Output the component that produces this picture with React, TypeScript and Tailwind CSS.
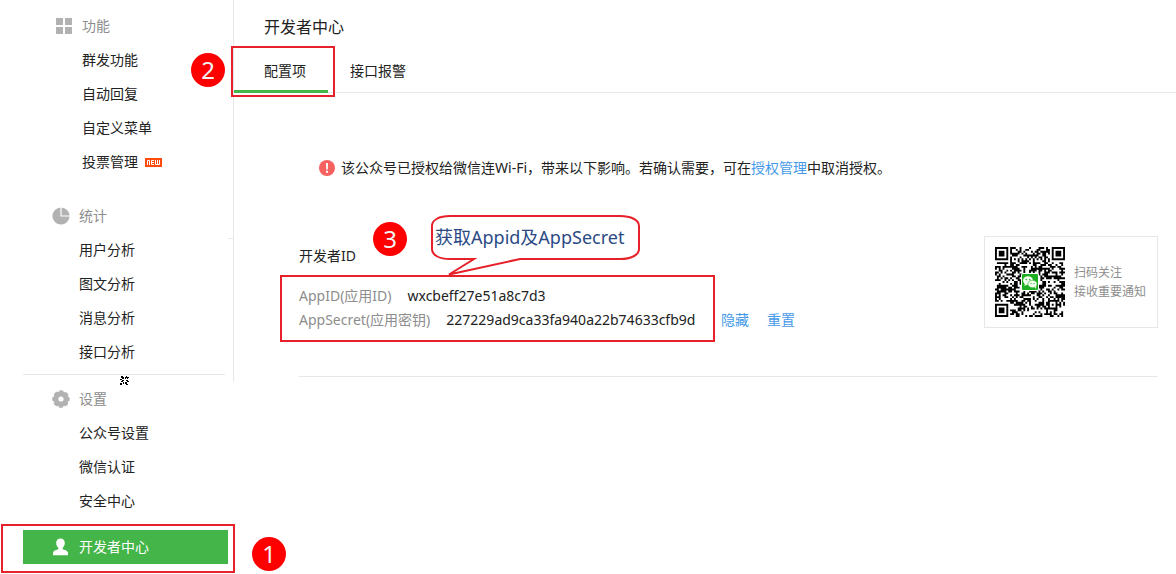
import React from "react";

interface NavGroupProps {
  title: string;
  icon: React.ReactNode;
  items: string[];
  newItem?: string;
  indent: string;
}

const GridIcon = () => (
  <svg width="17" height="16" viewBox="0 0 17 16" fill="#b2b2b2">
    <path d="M1 0h7v7H1zM10 0h7v7h-7zM1 9h7v7H1zM10 9h7v7h-7z" />
  </svg>
);

const PieIcon = () => (
  <svg width="18" height="18" viewBox="0 0 18 18">
    <circle cx="9" cy="9" r="8.6" fill="#b2b2b2" />
    <path d="M9 0v9h9" fill="none" stroke="#fff" strokeWidth="1.2" />
  </svg>
);

const GearIcon = () => (
  <svg width="18" height="18" viewBox="0 0 18 18">
    <circle cx="9" cy="9" r="7.8" fill="#b2b2b2" />
    <circle
      cx="9"
      cy="9"
      r="7"
      fill="none"
      stroke="#b2b2b2"
      strokeWidth="3.4"
      strokeDasharray="3.5 2"
      strokeDashoffset="1.75"
    />
    <circle cx="9" cy="9" r="2.6" fill="#fff" />
  </svg>
);

const UserIcon = () => (
  <svg width="17" height="18" viewBox="0 0 16 18" fill="#fff">
    <path d="M8 0.5c-2.700 0-4.300 2-4.300 4.600 0 2 .9 3.700 2.100 4.600.4 1-.2 1.600-1.300 2C2 12.500.5 13.300.5 15v2.300h15V15c0-1.700-1.500-2.500-4-3.300-1.100-.4-1.700-1-1.300-2 1.200-.9 2.100-2.600 2.100-4.600C12.300 2.500 10.700.5 8 .5z" />
  </svg>
);

const AlertIcon = () => (
  <svg width="16" height="16" viewBox="0 0 16 16">
    <circle cx="8" cy="8" r="8" fill="#f76260" />
    <path d="M7 3h2l-.2 6.500H7.200zM7 10.800h2v2H7z" fill="#fff" />
  </svg>
);

const NewBadge = () => (
  <svg width="17" height="9" viewBox="0 0 17 9" role="img" aria-label="new">
    <path d="M0 0h17v9H0z" fill="#ff4a0c" />
    <path
      d="M2.500 7V2.500h2V7M9 2.500H6.500v4H9M6.500 4.500H9M10.500 2v4.500h4V2M12.500 2v4.500"
      fill="none"
      stroke="#fff"
    />
  </svg>
);

const Speckle = () => (
  <svg
    className="absolute left-[120px] top-[376px]"
    width="9"
    height="9"
    viewBox="0 0 9 9"
    fill="#000"
  >
    <path d="M1 0h2v1h1v2H2V2H1zM5 1h1V0h1v2H6v1H5zM7 1h2v1H8v1H7zM0 3h2v1H0zM6 4h2v1h1v1H7V5H6zM2 4h2v1H3v1H1V5h1zM0 7h2v2H0zM3 6h1v2H3zM5 6h2v2h1v1H6V8H5z" />
  </svg>
);

const SIZE = 37;

const inFinder = (x: number, y: number) =>
  (x < 8 && y < 8) || (x >= SIZE - 8 && y < 8) || (x < 8 && y >= SIZE - 8);

const qrPath = () => {
  let seed = 71;
  let d = "";
  for (let y = 0; y < SIZE; y++) {
    for (let x = 0; x < SIZE; x++) {
      seed = (seed * 16807) % 2147483647;
      if (inFinder(x, y)) continue;
      const ring = Math.max(Math.abs(x - 30), Math.abs(y - 30));
      const on =
        ring <= 2
          ? ring !== 1
          : x === 6 || y === 6
            ? (x + y) % 2 === 0
            : seed / 2147483647 < 0.52;
      if (on) d += `M${x} ${y}h1v1h-1z`;
    }
  }
  [
    [0, 0],
    [30, 0],
    [0, 30],
  ].forEach(([x, y]) => {
    d += `M${x} ${y}h7v7h-7zM${x + 1} ${y + 1}v5h5v-5zM${x + 2} ${y + 2}h3v3h-3z`;
  });
  return d;
};

const QrCode = () => (
  <svg width="70" height="70" viewBox="0 0 70 70" role="img" aria-label="QR">
    <path d={qrPath()} transform="scale(1.892)" fill="#000" />
    <rect x="26" y="26" width="18" height="18" rx="2" fill="#fff" />
    <rect x="27" y="27" width="16" height="16" rx="1" fill="#1fae22" />
    <ellipse cx="33" cy="33.500" rx="5" ry="4.200" fill="#f4fff0" />
    <path d="M30 36l-.6 3 3-1.500z" fill="#f4fff0" />
    <ellipse cx="37.500" cy="37" rx="4.600" ry="3.800" fill="#f4fff0" stroke="#1fae22" strokeWidth=".6" />
    <path d="M39.500 40l1.500 2 .2-3z" fill="#f4fff0" />
    <g fill="#1fae22">
      <circle cx="31.300" cy="32.500" r=".7" />
      <circle cx="34.700" cy="32.500" r=".7" />
      <circle cx="36" cy="36.300" r=".6" />
      <circle cx="39" cy="36.300" r=".6" />
    </g>
  </svg>
);

const Step = ({ n, className }: { n: number; className: string }) => (
  <span
    className={`absolute flex h-[34px] w-[34px] items-center justify-center rounded-full bg-[#fe0000] text-2xl text-[#f3f3f3] ${className}`}
  >
    {n}
  </span>
);

const NavGroup = ({ title, icon, items, newItem, indent }: NavGroupProps) => (
  <section>
    <h2 className={`flex h-[34px] items-center text-[#8d8d8d] ${indent}`}>
      <span className="-ml-[27px] flex w-[27px]">{icon}</span>
      {title}
    </h2>
    <ul>
      {items.map((item) => (
        <li key={item} className={`flex h-[34px] items-center ${indent}`}>
          <a href="#">{item}</a>
          {item === newItem && (
            <span className="ml-[7px]">
              <NewBadge />
            </span>
          )}
        </li>
      ))}
    </ul>
  </section>
);

const Sidebar = () => (
  <nav className="relative w-[234px] shrink-0">
    <div className="border-r border-[#e7e7eb] pb-[7px] pt-[9px]">
      <NavGroup
        title="功能"
        icon={<GridIcon />}
        items={["群发功能", "自动回复", "自定义菜单", "投票管理"]}
        newItem="投票管理"
        indent="pl-[82px]"
      />
      <div className="h-5" />
      <NavGroup
        title="统计"
        icon={<PieIcon />}
        items={["用户分析", "图文分析", "消息分析", "接口分析"]}
        indent="pl-[79px]"
      />
      <hr className="ml-[23px] mr-2 mt-[5px] border-[#e7e7eb]" />
    </div>
    <Speckle />
    <span className="absolute right-0 top-[238px] h-px w-1.5 bg-[#e7e7eb]" />
    <NavGroup
      title="设置"
      icon={<GearIcon />}
      items={["公众号设置", "微信认证", "安全中心"]}
      indent="pl-[79px]"
    />
    <div className="relative -mr-px ml-px mt-1.5 border-2 border-[#e6212a] pb-[7px] pl-5 pr-[5px] pt-1">
      <a
        href="#"
        className="flex h-[34px] items-center bg-[#44b549] pl-[29px] text-white"
      >
        <span className="flex w-[27px]">
          <UserIcon />
        </span>
        开发者中心
      </a>
      <Step n={1} className="-right-[53px] top-[11px]" />
    </div>
  </nav>
);

const Tabs = () => (
  <div className="relative flex h-11 border-b border-[#e7e7eb]">
    <button className="-mb-px border-b-[3px] border-[#44b549] pl-[30px] pr-[22px] pt-0.5">
      配置项
    </button>
    <button className="px-[22px]">接口报警</button>
    <span className="absolute -left-[3px] -top-[3px] h-[51px] w-[104px] border-2 border-[#e6212a]" />
    <Step n={2} className="-left-[43px] top-1" />
  </div>
);

const Callout = () => (
  <div className="absolute left-[131px] -top-[70px] h-[62px] w-[210px]">
    <svg className="absolute inset-0" width="210" height="62" viewBox="0 0 210 62">
      <path
        d="M20 2H190C201 2 209 6 209 12V35C209 41 201 45 190 45H90L19 60.500L44 45H20C9 45 2 41 2 35V12C2 6 9 2 20 2Z"
        fill="#fff"
        stroke="#e6212a"
        strokeWidth="2"
      />
    </svg>
    <span className="relative block whitespace-nowrap pl-[5px] text-lg leading-[46px] text-[#2b4a85]">
      获取Appid及AppSecret
    </span>
  </div>
);

const DeveloperId = () => (
  <div className="relative pt-2">
    <h3 className="leading-6">开发者ID</h3>
    <Step n={3} className="-top-[14px] left-[74px]" />
    <div className="mt-4 flex items-end leading-6">
      <div className="relative min-w-[404px]">
        <span className="absolute -bottom-[10px] -left-[19px] -right-3 -top-[9px] border-2 border-[#e6212a]" />
        <Callout />
        <dl className="relative">
          <div className="flex gap-4">
            <dt className="text-[#8d8d8d]">AppID(应用ID)</dt>
            <dd>wxcbeff27e51a8c7d3</dd>
          </div>
          <div className="flex gap-4">
            <dt className="text-[#8d8d8d]">AppSecret(应用密钥)</dt>
            <dd>227229ad9ca33fa940a22b74633cfb9d</dd>
          </div>
        </dl>
      </div>
      <div className="ml-[18px] flex gap-[18px] text-[#459ae9]">
        <a href="#">隐藏</a>
        <a href="#">重置</a>
      </div>
    </div>
  </div>
);

const App = () => {
  return (
    <div className="flex min-h-screen bg-white font-['Noto_Sans','Noto_Sans_CJK_SC',sans-serif] text-sm text-[#222]">
      <Sidebar />
      <main className="min-w-0 flex-1">
        <h1 className="pb-2.5 pl-[30px] pt-[15px] text-base leading-6">开发者中心</h1>
        <Tabs />
        <p className="mt-[63px] flex items-center gap-1.5 pl-[85px] leading-6">
          <AlertIcon />
          <span>
            该公众号已授权给微信连Wi-Fi，带来以下影响。若确认需要，可在
            <a href="#" className="text-[#459ae9]">
              授权管理
            </a>
            中取消授权。
          </span>
        </p>
        <section className="ml-[65px] mr-[18px] mt-14 flex items-start justify-between border-b border-[#e7e7eb] pb-11">
          <DeveloperId />
          <div className="flex items-center gap-[9px] border border-[#e7e7eb] py-2.5 pl-2.5 pr-[11px] text-xs leading-[19px] text-[#8d8d8d]">
            <QrCode />
            <p>
              扫码关注
              <br />
              接收重要通知
            </p>
          </div>
        </section>
      </main>
    </div>
  );
};

export default App;
